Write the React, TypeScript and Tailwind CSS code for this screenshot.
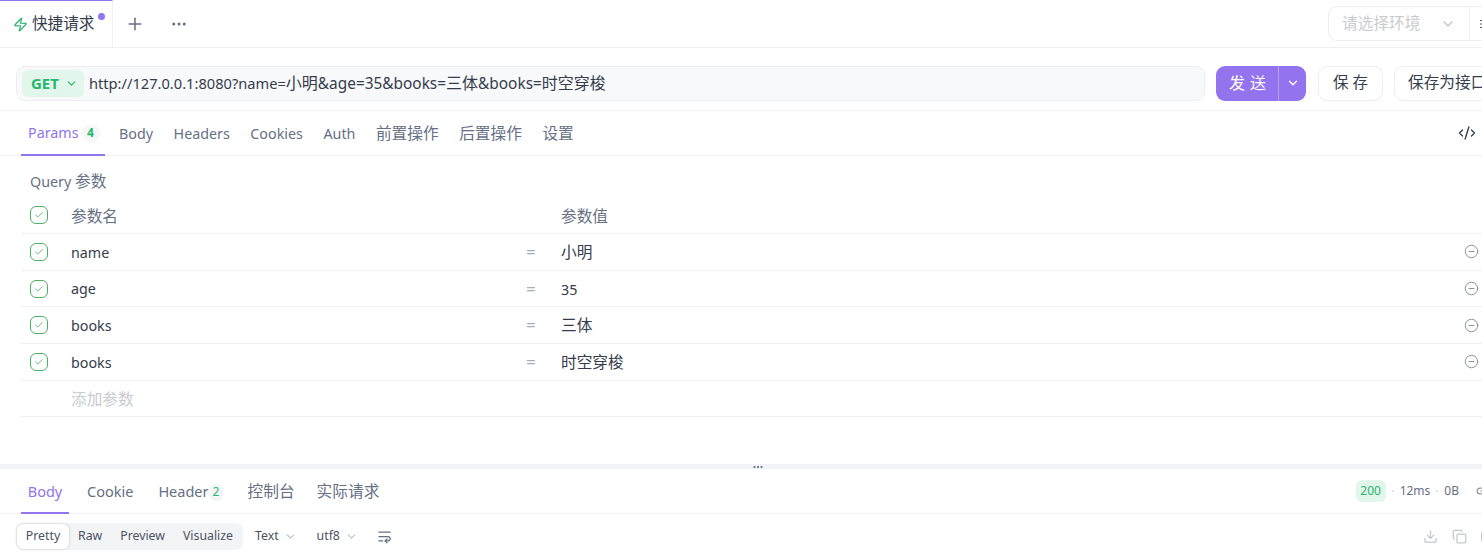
import { Plus, Ellipsis, Zap, ChevronDown, CodeXml, Check, CircleMinus, Download, Copy, WrapText, AlignJustify, Link2 } from "lucide-react";

const FONT = "font-['Noto_Sans','Noto_Sans_CJK_SC',sans-serif]";

const params = [
  { name: "name", value: "小明" },
  { name: "age", value: "35" },
  { name: "books", value: "三体" },
  { name: "books", value: "时空穿梭" },
];

// chinese glyphs sit a bit larger than the latin text next to them
function Cjk({ children }: { children: string }) {
  return <span className="text-[15.7px]">{children}</span>;
}

function CheckBox() {
  return (
    <span className="flex h-[18px] w-[18px] items-center justify-center rounded-[6px] border border-[#4caf64] text-[#4caf64]">
      <Check size={10} strokeWidth={2} />
    </span>
  );
}

function TopBar() {
  return (
    <div className="flex h-[48px] items-stretch border-b border-[#f0f1f4]">
      <div className="relative flex w-[113px] items-center gap-[4px] border-r border-t border-r-[#f0f1f4] border-t-[#9373ee] pl-[13px]">
        <Zap size={15} strokeWidth={2} className="text-[#27b56d]" />
        <span className="text-[15.6px] text-[#353c4b]">快捷请求</span>
        <span className="absolute left-[98px] top-[12px] h-[7px] w-[7px] rounded-full bg-[#9373ee]" />
      </div>
      <div className="flex w-[44px] items-center justify-center text-[#667085]">
        <Plus size={20} strokeWidth={1.8} />
      </div>
      <div className="flex w-[44px] items-center justify-center text-[#667085]">
        <Ellipsis size={18} strokeWidth={2} />
      </div>
      <div className="ml-auto flex items-center">
        <div className="mr-[-14px] flex h-[35px] w-[168px] shrink-0 items-center rounded-l-[9px] border border-[#eceef2] pl-[13px] text-[15.7px] text-[#c9cbd0]">
          <span>请选择环境</span>
          <ChevronDown size={16} className="ml-[20px] text-[#bfc2c8]" />
          <span className="ml-[13px] flex h-full items-center border-l border-[#eceef2] pl-[9px] text-[#4b5262]">
            <AlignJustify size={12} />
          </span>
        </div>
      </div>
    </div>
  );
}

function RequestBar() {
  return (
    <div className="flex h-[63px] items-center border-b border-[#f0f1f4] pl-[16px] pt-[8px]">
      <div className="flex h-[35px] w-[1189px] shrink-0 items-center rounded-[9px] border border-[#eceef2] bg-[#f8f9fb] pl-[5px]">
        <div className="flex h-[27px] w-[62px] items-center gap-[6px] rounded-[6px] bg-[#e3f6ec] pl-[9px] text-[#27b56d]">
          <span className="text-[15px] font-bold">GET</span>
          <ChevronDown size={13} />
        </div>
        <span className="ml-[5px] text-[14.65px] text-[#353c4b]">
          http://127.0.0.1:8080?name=<span className="text-[16px]">小明</span>
          <span className="text-[15.4px]">&amp;age=35&amp;books=</span><span className="text-[16px]">三体</span>
          <span className="text-[15.4px]">&amp;books=</span><span className="text-[16px]">时空穿梭</span>
        </span>
      </div>
      <div className="ml-[11px] flex h-[35px] w-[90px] shrink-0 items-center rounded-[9px] bg-[#9373ee] text-white">
        <span className="flex w-[62px] justify-center pl-[6px] text-[16px] tracking-[5px]">发送</span>
        <span className="flex h-full flex-1 items-center justify-center border-l border-[#b7a2f3]">
          <ChevronDown size={14} strokeWidth={2.2} />
        </span>
      </div>
      <div className="ml-[12px] flex h-[35px] w-[65px] shrink-0 items-center justify-center rounded-[9px] border border-[#eceef2] text-[15.5px] text-[#353c4b]">保 存</div>
      <div className="ml-[11px] flex h-[35px] w-[110px] shrink-0 items-center rounded-l-[9px] border border-[#eceef2] pl-[13px] text-[15.7px] text-[#353c4b] whitespace-nowrap">保存为接口</div>
    </div>
  );
}

function ParamTabs() {
  return (
    <div className="flex h-[45px] items-stretch border-b border-[#f0f1f4] pl-[21px] text-[14.3px] text-[#667085]">
      <div className="mb-[-1px] flex w-[84px] items-center gap-[3px] border-b-2 border-[#9373ee] pl-[7px] text-[#9373ee]">
        <span>Params</span>
        <span className="flex h-[18px] w-[18px] items-center justify-center rounded-full bg-[#f6f7f9] text-[12px] font-bold text-[#27b56d]">4</span>
      </div>
      <div className="ml-[14px] flex items-center gap-[20.5px] pt-[1px]">
        <span>Body</span>
        <span>Headers</span>
        <span>Cookies</span>
        <span>Auth</span>
        <Cjk>前置操作</Cjk>
        <Cjk>后置操作</Cjk>
        <Cjk>设置</Cjk>
      </div>
      <div className="ml-auto flex items-center pr-[6px] text-[#353c4b]">
        <CodeXml size={18} strokeWidth={1.8} />
      </div>
    </div>
  );
}

function ParamTable() {
  return (
    <div className="h-[308px] pl-[21px]">
      <div className="flex h-[42px] items-end pb-[4px] pl-[9px] text-[14.3px] text-[#667085]">
        <span>Query <Cjk>参数</Cjk></span>
      </div>
      <div className="flex h-[36px] items-center border-b border-[#f0f1f4] text-[#667085]">
        <span className="w-[50px] pb-[1px] pl-[9px]"><CheckBox /></span>
        <span className="w-[490px] pt-[1px]"><Cjk>参数名</Cjk></span>
        <span className="pt-[1px]"><Cjk>参数值</Cjk></span>
      </div>
      {params.map((p, i) => (
        <div key={i} className="flex h-[36.7px] items-center border-b border-[#f0f1f4] text-[14.3px] text-[#353c4b]">
          <span className="w-[50px] pl-[9px]"><CheckBox /></span>
          <span className="w-[455px] pt-[1px]">{p.name}</span>
          <span className="w-[35px] text-[17px] text-[#a9adb6]">=</span>
          <span className="pt-[2px]">{/[0-9]/.test(p.value) ? p.value : <Cjk>{p.value}</Cjk>}</span>
          <CircleMinus size={15} strokeWidth={1.6} className="ml-auto mr-[3px] text-[#8d93a0]" />
        </div>
      ))}
      <div className="flex h-[36px] items-center border-b border-[#f0f1f4] pl-[50px] pt-[3px] text-[#c9cbd0]">
        <Cjk>添加参数</Cjk>
      </div>
    </div>
  );
}

function ResponseTabs() {
  return (
    <div className="flex h-[45px] items-stretch border-b border-[#f0f1f4] pl-[21px] text-[14.5px] text-[#667085]">
      <span className="mb-[-1px] flex w-[48px] items-center justify-center border-b-2 border-[#9373ee] pt-[2px] text-[#9373ee]">Body</span>
      <span className="ml-[18px] flex items-center pt-[2px]">Cookie</span>
      <span className="ml-[25px] flex items-center gap-[1px] pt-[2px]">
        Header
        <span className="flex h-[17px] w-[13px] items-center justify-center rounded-[5px] bg-[#f3f5f7] text-[12px] text-[#27b56d]">2</span>
      </span>
      <span className="ml-[25px] flex items-center pt-[2px]"><Cjk>控制台</Cjk></span>
      <span className="ml-[22px] flex items-center pt-[2px]"><Cjk>实际请求</Cjk></span>
      <div className="ml-auto mr-[-8px] flex items-center text-[12px]">
        <span className="flex h-[22px] w-[30px] items-center justify-center rounded-[6px] bg-[#e3f6ec] text-[#27b56d]">200</span>
        <span className="mx-[6px] h-[2px] w-[2px] rounded-full bg-[#d5d8de]" />
        <span>12ms</span>
        <span className="mx-[6px] h-[2px] w-[2px] rounded-full bg-[#d5d8de]" />
        <span>0B</span>
        <Link2 size={14} className="ml-[17px] text-[#8d93a0]" />
      </div>
    </div>
  );
}

function ResponseToolbar() {
  return (
    <div className="flex h-[37px] items-center pl-[16px] pt-[7px] text-[12.3px] text-[#4b5262]">
      <div className="flex h-[27px] items-center rounded-[7px] bg-[#f3f4f6] p-[1px]">
        <span className="flex h-[25px] w-[52px] items-center justify-center rounded-[6px] bg-white shadow-[0_0_3px_rgba(0,0,0,0.2)]">Pretty</span>
        <span className="ml-[9px]">Raw</span>
        <span className="ml-[18px]">Preview</span>
        <span className="ml-[18px] mr-[9px]">Visualize</span>
      </div>
      <span className="ml-[12px] flex items-center gap-[5px]">
        Text <ChevronDown size={13} className="text-[#bfc2c8]" />
      </span>
      <span className="ml-[20px] flex items-center gap-[5px]">
        utf8 <ChevronDown size={13} className="text-[#bfc2c8]" />
      </span>
      <WrapText size={15} className="ml-[19px] text-[#667085]" />
      <div className="ml-auto mr-[-5px] flex items-center gap-[14px] pr-[1px] text-[#c4c7cd]">
        <Download size={15} />
        <Copy size={15} />
        <span className="h-[15px] w-[5px] overflow-hidden rounded-l-full border border-[#c4c7cd]" />
      </div>
    </div>
  );
}

export default function App() {
  return (
    <div className={`h-[552px] w-[1482px] overflow-hidden bg-white ${FONT}`}>
      <TopBar />
      <RequestBar />
      <ParamTabs />
      <ParamTable />
      <div className="flex h-[5px] items-center justify-center bg-[#f2f3f7] pl-[34px]">
        <Ellipsis size={12} strokeWidth={2.5} className="text-[#667085]" />
      </div>
      <ResponseTabs />
      <ResponseToolbar />
    </div>
  );
}
